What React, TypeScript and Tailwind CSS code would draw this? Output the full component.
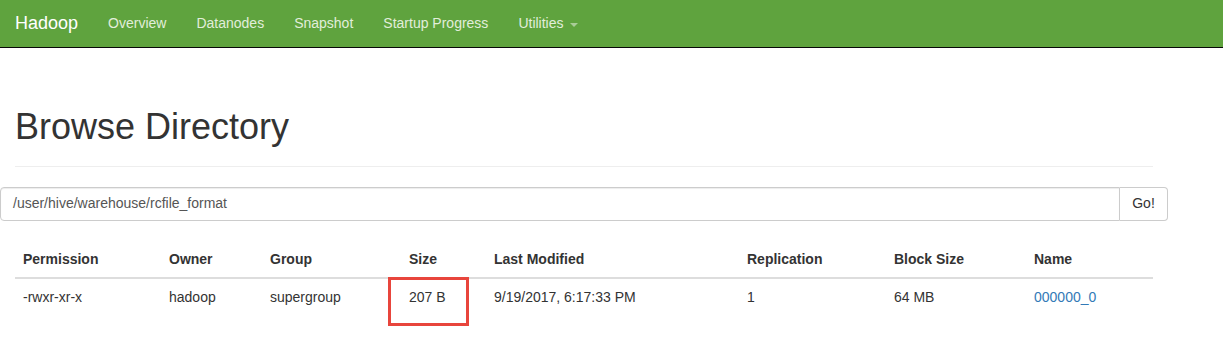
import React from "react";

const cols = [
  { name: "Permission", w: "w-[146px]" },
  { name: "Owner", w: "w-[101px]" },
  { name: "Group", w: "w-[139px]" },
  { name: "Size", w: "w-[85px]" },
  { name: "Last Modified", w: "w-[253px]" },
  { name: "Replication", w: "w-[147px]" },
  { name: "Block Size", w: "w-[140px]" },
  { name: "Name", w: "" },
];

const row = ["-rwxr-xr-x", "hadoop", "supergroup", "207 B", "9/19/2017, 6:17:33 PM", "1", "64 MB"];

export default function App() {
  return (
    <div className="w-[1223px] h-[350px] bg-white text-[14px] text-[#333] font-['Liberation_Sans',Arial,sans-serif]">
      {/* Navbar */}
      <div className="h-[48px] bg-[#5fa33e] border-b border-[#080808] flex items-center">
        <span className="px-[15px] text-[18px] text-white">Hadoop</span>
        <nav className="flex items-center">
          {["Overview", "Datanodes", "Snapshot", "Startup Progress"].map((t) => (
            <span key={t} className="px-[15px] text-[#e2eedb]">
              {t}
            </span>
          ))}
          <span className="px-[15px] text-[#e2eedb] flex items-center">
            Utilities
            <span className="ml-[6px] mt-[2px] w-0 h-0 border-t-[4px] border-t-[#a9cc98] border-x-[4px] border-x-transparent" />
          </span>
        </nav>
      </div>

      <div className="w-[1168px] px-[15px] pt-[59px]">
        {/* Page header */}
        <div className="mb-[20px] pb-[9px] border-b border-[#eee]">
          <h1 className="mb-[10px] text-[36px] leading-[1.1] font-normal">Browse Directory</h1>
        </div>

        {/* Directory input */}
        <div className="-ml-[15px] w-[1168px] flex h-[34px]">
          <div className="flex-1 flex items-center px-[12px] border border-[#ccc] rounded-l-[4px] text-[#555] shadow-[inset_0_1px_1px_rgba(0,0,0,0.075)]">
            /user/hive/warehouse/rcfile_format
          </div>
          <button className="w-[48px] border border-l-0 border-[#ccc] rounded-r-[4px] bg-white text-[#333]">
            Go!
          </button>
        </div>

        {/* Listing */}
        <div className="relative mt-[20px]">
          <table className="w-[1138px] table-fixed border-collapse">
            <thead>
              <tr>
                {cols.map((c) => (
                  <th
                    key={c.name}
                    className={`${c.w} text-left font-bold px-[8px] py-[8px] leading-[20px] border-b-2 border-[#ddd]`}
                  >
                    {c.name}
                  </th>
                ))}
              </tr>
            </thead>
            <tbody>
              <tr>
                {row.map((v, i) => (
                  <td key={i} className="px-[8px] py-[8px] leading-[20px]">
                    {v}
                  </td>
                ))}
                <td className="px-[8px] py-[8px] leading-[20px] text-[#337ab7]">000000_0</td>
              </tr>
            </tbody>
          </table>
          {/* highlight box */}
          <div className="absolute left-[373px] top-[36px] w-[81px] h-[49px] border-[3px] border-[#e8453c]" />
        </div>
      </div>
    </div>
  );
}
